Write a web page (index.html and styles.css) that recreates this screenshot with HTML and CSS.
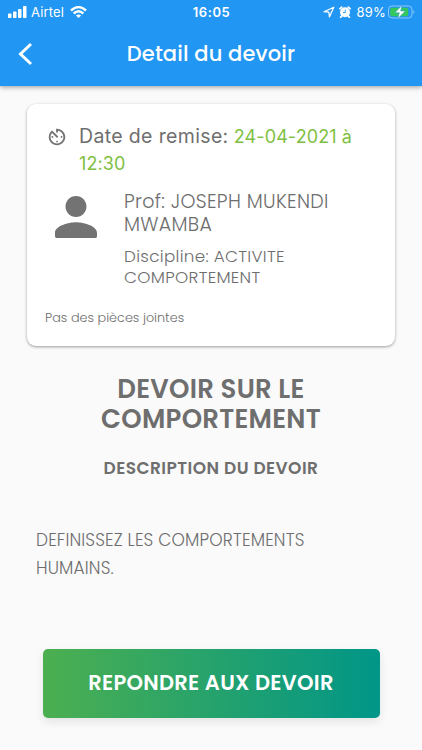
FILE: index.html
```html
<!DOCTYPE html>
<html lang="fr">
<head>
<meta charset="utf-8">
<title>Detail du devoir</title>
<link rel="stylesheet" href="styles.css">
</head>
<body>
<header class="topbar">
  <div class="status">
    <div class="status-left">
      <svg class="signal" width="19" height="12" viewBox="0 0 19 12" fill="#fff"><rect x="0" y="7.5" width="3.5" height="4.5" rx=".8"/><rect x="5" y="5.5" width="3.5" height="6.5" rx=".8"/><rect x="10" y="3" width="3.5" height="9" rx=".8"/><rect x="15" y="0" width="3.5" height="12" rx=".8"/></svg>
      <span class="carrier">Airtel</span>
      <svg class="wifi" width="17" height="12" viewBox="0 0 17 12" fill="none" stroke="#fff" stroke-width="2.4"><path d="M1 4.500Q8.500-2.300 16 4.500M3.700 7.500Q8.500 3.200 13.300 7.500"/><path d="M8.500 12L5.900 9.400Q8.500 7.400 11.100 9.400Z" fill="#fff" stroke="none"/></svg>
    </div>
    <span class="clock">16:05</span>
    <div class="status-right">
      <svg width="12" height="12" viewBox="0 0 12 12" fill="none" stroke="#fff" stroke-width="1.200" stroke-linejoin="round"><path d="M10.800 1.200L1 5.700L5.900 6.200L6.400 11Z"/></svg>
      <svg class="alarm" width="12" height="12" viewBox="0 0 12 12"><path d="M1 2.700L2.700 1.200M11 2.700L9.300 1.200M2.700 10L1.700 11.200M9.300 10L10.300 11.200" stroke="#fff" stroke-width="1.800" stroke-linecap="round"/><circle cx="6" cy="6.200" r="5" fill="#fff"/><path d="M6.300 3.500V6.500H4" fill="none" stroke="#2196f3" stroke-width=".9"/></svg>
      <span class="percent">89%</span>
      <svg class="battery" width="27" height="14" viewBox="0 0 27 14"><rect x=".5" y="1" width="23.500" height="12" rx="3.500" fill="none" stroke="#8fc8f8"/><rect x="2.200" y="2.700" width="18" height="8.600" rx="2" fill="#35c75a"/><path d="M25.300 5Q27.500 7 25.300 9Z" fill="#8fc8f8"/><path d="M14 .3L6.800 7.800H11.300L9.700 13.700L17.400 5.900H12.700Z" fill="#fff" stroke="#2a9fc4" stroke-width=".6"/></svg>
    </div>
  </div>
  <div class="nav">
    <svg class="back" width="16" height="24" viewBox="0 0 16 24" fill="none" stroke="#fff" stroke-width="3"><path d="M14 2L3.500 12L14 22"/></svg>
    <h1 class="title">Detail du devoir</h1>
  </div>
</header>
<main>
  <section class="card">
    <div class="due">
      <svg class="timer" width="22" height="22" viewBox="0 0 24 24" fill="#737373"><path d="M11 17c0 .55.45 1 1 1s1-.45 1-1-.45-1-1-1-1 .45-1 1zm0-14v4h2V5.080c3.390.49 6 3.390 6 6.920 0 3.870-3.130 7-7 7s-7-3.130-7-7c0-1.680.59-3.220 1.580-4.420L12 13l1.410-1.410-6.800-6.800v.02C4.420 6.450 3 9.050 3 12c0 4.970 4.020 9 9 9 4.970 0 9-4.030 9-9s-4.030-9-9-9h-1zm7 9c0-.55-.45-1-1-1s-1 .45-1 1 .45 1 1 1 1-.45 1-1zM6 12c0 .55.45 1 1 1s1-.45 1-1-.45-1-1-1-1 .45-1 1z"/></svg>
      <p class="due-text"><span class="due-label">Date de remise:</span> <span class="due-date">24-04-2021 à<br>12:30</span></p>
    </div>
    <div class="teacher">
      <svg class="person" width="42" height="42" viewBox="4 4 16 16" fill="#737373"><path d="M12 12c2.210 0 4-1.790 4-4s-1.790-4-4-4-4 1.790-4 4 1.790 4 4 4zm0 2c-2.670 0-8 1.340-8 4v1.300q0 .7.700.7h14.600q.7 0 .7-.7V18c0-2.660-5.330-4-8-4z"/></svg>
      <div class="details">
        <p class="prof">Prof: JOSEPH MUKENDI<br>MWAMBA</p>
        <p class="subject">Discipline: ACTIVITE<br>COMPORTEMENT</p>
      </div>
    </div>
    <p class="files">Pas des pièces jointes</p>
  </section>
  <h2 class="homework">DEVOIR SUR LE<br>COMPORTEMENT</h2>
  <h3 class="caption">DESCRIPTION DU DEVOIR</h3>
  <p class="body">DEFINISSEZ LES COMPORTEMENTS<br>HUMAINS.</p>
  <button class="answer" type="button">REPONDRE AUX DEVOIR</button>
</main>
</body>
</html>
```
FILE: styles.css
```css
* { box-sizing: border-box; margin: 0; padding: 0; }
body { width: 422px; height: 750px; overflow: hidden; background: #fafafa; color: #6e6e6e; font-family: Poppins, Lato, sans-serif; white-space: nowrap; }
svg { display: block; flex: none; }
.topbar { height: 86px; background: #2196f3; color: #fff; box-shadow: 0 1px 5px rgba(0,0,0,.4); }
.status { height: 24px; display: grid; grid-template-columns: 1fr auto 1fr; align-items: center; padding: 0 7px 0 8px; font: 13px/24px Inter, sans-serif; }
.status-left, .status-right { display: flex; align-items: center; }
.status-right { justify-content: flex-end; }
.carrier { margin: 0 6px 0 4px; letter-spacing: .15px; }
.clock { font-weight: 600; letter-spacing: .6px; }
.alarm { margin: 0 6px 0 4px; }
.percent { letter-spacing: .2px; margin-right: 2px; }
.nav { height: 60px; display: grid; grid-template-columns: 50px 1fr 50px; align-items: center; }
.back { margin-left: 17px; }
.title { font-size: 21px; line-height: 26px; font-weight: 500; letter-spacing: .15px; text-align: center; }
main { display: flex; flex-direction: column; }
.card { margin: 18px 27px 0; height: 242px; background: #fff; border-radius: 9px; box-shadow: 0 1px 3px rgba(0,0,0,.38); padding: 19px 18px 0; }
.due { display: flex; }
.timer { margin: 3px 11px 0 1px; }
.due-text { font: 18.500px/27px Inter, sans-serif; }
.due-label { font-size: 19.500px; letter-spacing: .35px; }
.due-date { color: #7fbf42; font-size: 18px; letter-spacing: .1px; }
.teacher { display: flex; margin-top: 13px; padding-left: 10px; }
.person { margin-top: 6px; }
.details { margin-left: 27px; }
.prof { font-size: 19px; line-height: 23px; font-weight: 300; letter-spacing: .33px; }
.subject { font-size: 16.800px; line-height: 20.500px; margin-top: 10px; font-weight: 300; letter-spacing: .3px; }
.files { font-size: 12.800px; line-height: 18px; margin-top: 22px; font-weight: 300; letter-spacing: 0; }
.homework { margin-top: 28px; text-align: center; font-size: 26px; line-height: 30px; font-weight: 600; letter-spacing: .25px; }
.caption { margin-top: 23px; text-align: center; font-size: 17px; line-height: 22px; font-weight: 600; letter-spacing: .45px; }
.body { margin: 47px 0 0 36px; font-size: 17px; line-height: 28px; font-weight: 300; letter-spacing: .15px; }
.answer { margin: 66.500px 42.500px 0; height: 69px; border: 0; border-radius: 5px; background: linear-gradient(to right, #4caf50, #009688); box-shadow: 0 4px 10px rgba(0,0,0,.09); color: #fff; font: 600 21px/26px Poppins, Lato, sans-serif; letter-spacing: .28px; }
```
